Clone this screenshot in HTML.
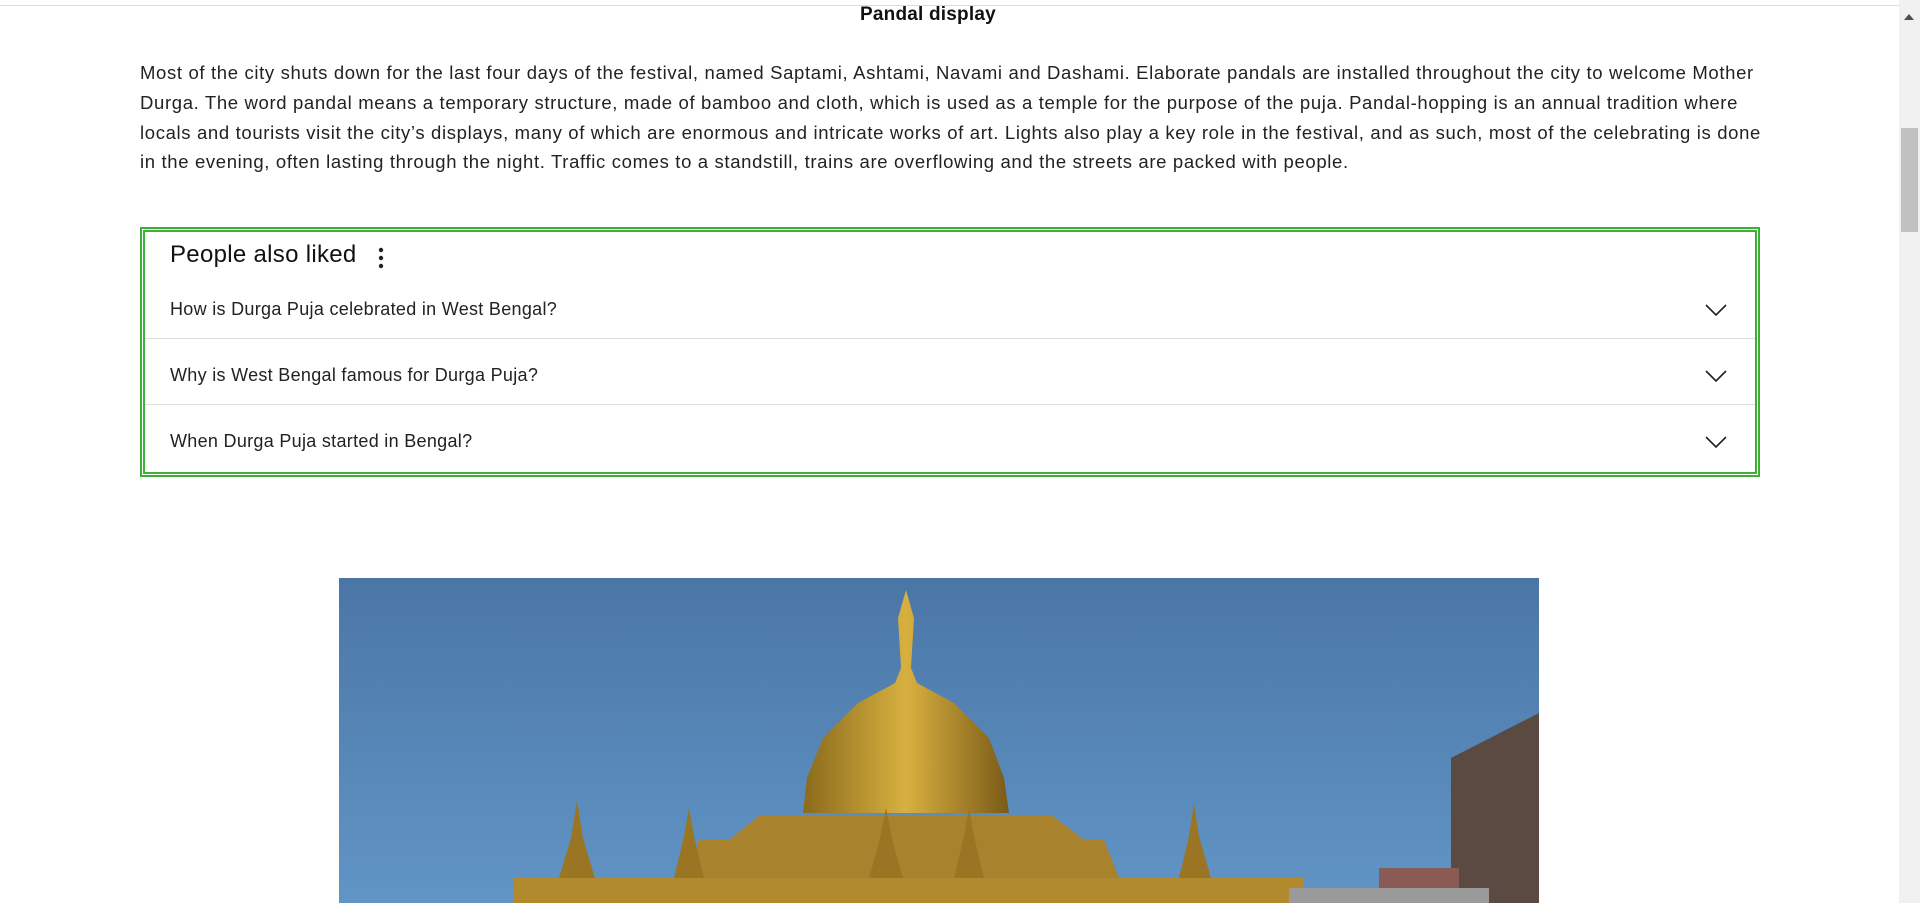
<!DOCTYPE html>
<html><head><meta charset="utf-8">
<style>
html,body{margin:0;padding:0;background:#fff;width:1920px;height:903px;overflow:hidden;font-family:"Segoe UI","Liberation Sans",sans-serif;color:#1a1a1a}
.topline{position:absolute;left:0;top:5px;width:1899px;height:1px;background:#ddd}
.title{position:absolute;left:860px;top:2px;font-weight:bold;font-size:19px;line-height:26px;color:#111;letter-spacing:0.2px}
.para{position:absolute;left:140px;top:58px;width:1740px;font-size:18.5px;line-height:29.8px;color:#222;letter-spacing:0.65px;white-space:nowrap}
.box{position:absolute;left:140px;top:227px;width:1620px;height:250px;box-sizing:border-box;border:5px double #3db135}
.h{position:absolute;left:25px;top:6px;font-size:24px;line-height:34px;color:#111;letter-spacing:0.3px}
.dots{position:absolute;left:233px;top:15px}
.row{position:absolute;left:0;width:1610px;height:66px;font-size:18px;color:#222;letter-spacing:0.3px}
.row span{position:absolute;left:25px;top:21px}
.row svg{position:absolute;right:28px;top:26px}
.sep{position:absolute;left:0;width:1610px;height:1px;background:#ddd}
.sb{position:absolute;left:1899px;top:0;width:21px;height:903px;background:#f1f1f1}
.thumb{position:absolute;left:2px;top:128px;width:17px;height:104px;background:#c1c1c1}
</style></head><body>
<div class="topline"></div>
<div class="title">Pandal display</div>
<div class="para">Most of the city shuts down for the last four days of the festival, named Saptami, Ashtami, Navami and Dashami. Elaborate pandals are installed throughout the city to welcome Mother<br>Durga. The word pandal means a temporary structure, made of bamboo and cloth, which is used as a temple for the purpose of the puja. Pandal-hopping is an annual tradition where<br>locals and tourists visit the city’s displays, many of which are enormous and intricate works of art. Lights also play a key role in the festival, and as such, most of the celebrating is done<br>in the evening, often lasting through the night. Traffic comes to a standstill, trains are overflowing and the streets are packed with people.</div>
<div class="box">
<div class="h">People also liked</div>
<svg class="dots" width="6" height="22" viewBox="0 0 6 22"><circle cx="3" cy="3" r="2.2" fill="#222"/><circle cx="3" cy="11" r="2.2" fill="#222"/><circle cx="3" cy="19" r="2.2" fill="#222"/></svg>
<div class="row" style="top:46px"><span>How is Durga Puja celebrated in West Bengal?</span><svg width="22" height="12" viewBox="0 0 22 12"><path d="M1 1 L11 11 L21 1" fill="none" stroke="#222" stroke-width="1.6"/></svg></div>
<div class="sep" style="top:106px"></div>
<div class="row" style="top:112px"><span>Why is West Bengal famous for Durga Puja?</span><svg width="22" height="12" viewBox="0 0 22 12"><path d="M1 1 L11 11 L21 1" fill="none" stroke="#222" stroke-width="1.6"/></svg></div>
<div class="sep" style="top:172px"></div>
<div class="row" style="top:178px"><span>When Durga Puja started in Bengal?</span><svg width="22" height="12" viewBox="0 0 22 12"><path d="M1 1 L11 11 L21 1" fill="none" stroke="#222" stroke-width="1.6"/></svg></div>
</div>
<svg style="position:absolute;left:339px;top:578px" width="1200" height="325" viewBox="0 0 1200 325">
<defs>
<linearGradient id="sky" x1="0" y1="0" x2="0" y2="1"><stop offset="0" stop-color="#4a76a6"/><stop offset="1" stop-color="#6195c6"/></linearGradient>
<linearGradient id="gold" x1="0" y1="0" x2="1" y2="0"><stop offset="0" stop-color="#8a6a1c"/><stop offset=".5" stop-color="#d8b040"/><stop offset="1" stop-color="#7a5a18"/></linearGradient>
</defs>
<rect width="1200" height="325" fill="url(#sky)"/>
<path d="M567 12 L575 40 L572 90 L578 105 L615 125 L650 160 L665 200 L670 235 L464 235 L468 200 L484 160 L519 125 L556 105 L562 90 L559 40 Z" fill="url(#gold)"/>
<path d="M420 238 L714 238 L745 262 L765 262 L780 300 L790 300 L790 325 L300 325 L300 300 L350 300 L360 262 L390 262 Z" fill="#a8822c"/>
<rect x="175" y="300" width="790" height="25" fill="#b08a2c"/>
<path d="M220 300 L232 260 L238 222 L244 260 L256 300 Z M335 300 L345 258 L350 230 L355 258 L365 300 Z M615 300 L625 258 L630 230 L635 258 L645 300 Z M840 300 L850 258 L855 225 L860 258 L872 300 Z M530 300 L540 265 L547 230 L554 265 L564 300 Z" fill="#9a7624"/>
<path d="M1112 325 L1112 180 L1200 135 L1200 325 Z" fill="#5a4a42"/>
<rect x="1040" y="290" width="80" height="35" fill="#8a5a55"/>
<rect x="950" y="310" width="200" height="15" fill="#9a9a9a"/>
</svg>
<div class="sb"><svg style="position:absolute;left:5px;top:14px" width="10" height="6" viewBox="0 0 10 6"><path d="M0 6 L5 0 L10 6Z" fill="#505050"/></svg><div class="thumb"></div></div>
</body></html>
